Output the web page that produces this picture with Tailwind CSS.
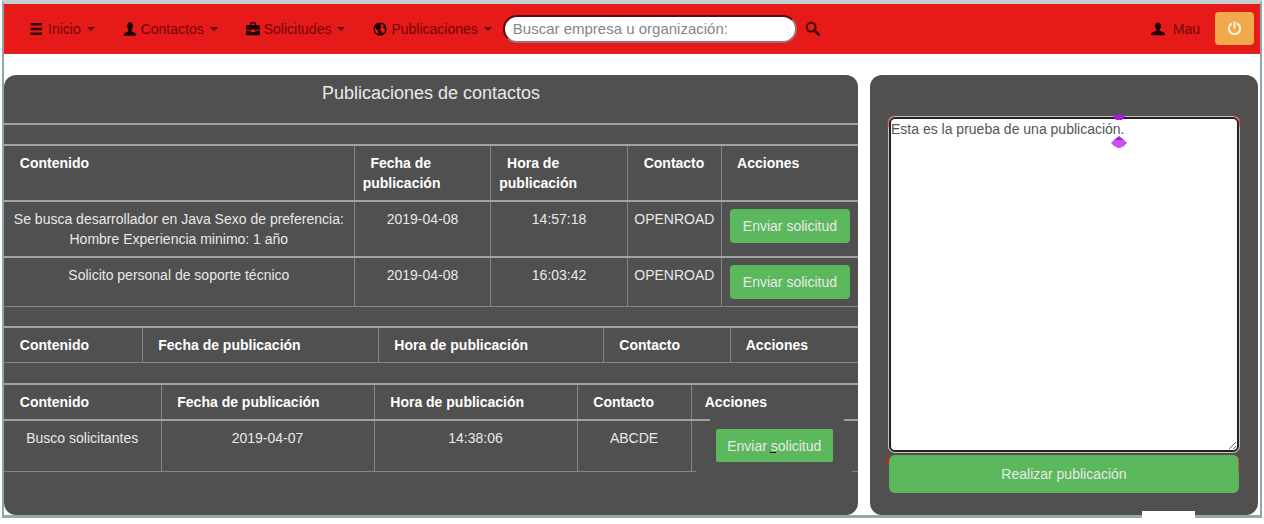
<!DOCTYPE html>
<html lang="es">
<head>
<meta charset="utf-8">
<meta name="viewport" content="width=device-width, initial-scale=1">
<title>Publicaciones</title>
<script src="https://cdn.jsdelivr.net/npm/@tailwindcss/browser@4"></script>
</head>
<body class="bg-white font-['Liberation_Sans',Arial,sans-serif] text-sm leading-5 text-[#e8e8e8]">
<div class="relative mx-0.5 border-x-2 border-t-4 border-b-3 border-x-[#8fa6ae] border-t-[#c3cfcf] border-b-[#93aaaa]">
  <nav class="flex h-[50px] items-center border-b border-[#d03030] bg-[#e71a1a] pr-1.5 text-[#6e0808]">
    <ul class="flex items-center gap-7 pl-[26px]">
      <li><button type="button" class="flex items-center gap-1">
        <svg class="size-[14px]" viewBox="0 0 14 14" fill="#2a0606"><path d="M.5 1h11.500v2.500H.5zM.5 5.700h11.500v2.500H.5zM.5 10.400h11.500v2.500H.5z"/></svg>Inicio
        <svg class="ml-0.5 h-1 w-2" viewBox="0 0 8 4" fill="#5a0808"><path d="M0 0h8L4 4z"/></svg></button></li>
      <li><button type="button" class="flex items-center gap-1">
        <svg class="size-[14px]" viewBox="0 0 14 14" fill="#1c0404"><path d="M7 .2C5 .2 4.100 1.600 4.100 3.600c0 2.200.8 3 1.200 4.300.2 1-.2 1.600-1.200 2.100C2.400 10.800.8 11.300.8 12.500V13.800h12.400v-1.300c0-1.200-1.600-1.700-3.300-2.500-1-.5-1.400-1.100-1.200-2.100.4-1.300 1.200-2.100 1.200-4.300C9.900 1.600 9 .2 7 .2z"/></svg>Contactos
        <svg class="ml-0.5 h-1 w-2" viewBox="0 0 8 4" fill="#5a0808"><path d="M0 0h8L4 4z"/></svg></button></li>
      <li><button type="button" class="flex items-center gap-1">
        <svg class="size-[14px]" viewBox="0 0 14 14" fill="#1c0404"><path fill-rule="evenodd" d="M4 3V1.500Q4 .3 5.200.3h3.600Q10 .3 10 1.500V3h2.500q1.500 0 1.500 1.500v2.700L9 8.600V7.500H5v1.100L0 7.200V4.500Q0 3 1.500 3zM5.300 3h3.400V1.600H5.300zM0 8.200l5 1.300v.8h4v-.8l5-1.300v4.100q0 .9-1 .9H1q-1 0-1-.9z"/></svg>Solicitudes
        <svg class="ml-0.5 h-1 w-2" viewBox="0 0 8 4" fill="#5a0808"><path d="M0 0h8L4 4z"/></svg></button></li>
      <li><button type="button" class="flex items-center gap-1">
        <svg class="size-[14px]" viewBox="0 0 14 14" fill="#1c0404"><path fill-rule="evenodd" d="M7 .4a6.600 6.600 0 1 0 0 13.200A6.600 6.600 0 0 0 7 .4zM7.600 2c1.800.1 3.300 1.200 4 2.700l-1.300-.4-1 .8 1.600 1 1.200 1.500c-.2 1.700-1.300 3.200-2.800 3.900l-.6-1.900-1.700-.9.3-1.900 1.100-.9-1.100-1 .9-1.200zM2.100 5.700l1.300 1.600 1.800 1.300-.1 1.900.6 1.600C3.500 11.600 1.900 9.500 1.900 7z"/></svg>Publicaciones
        <svg class="ml-0.5 h-1 w-2" viewBox="0 0 8 4" fill="#5a0808"><path d="M0 0h8L4 4z"/></svg></button></li>
    </ul>
    <form class="ml-[11px] flex items-center gap-2" onsubmit="return false">
      <input type="search" aria-label="Buscar empresa u organización" placeholder="Buscar empresa u organización:" class="h-7 w-[294px] rounded-full border-2 border-t-[#5c0c10] border-r-[#a07070] border-b-[#a07070] border-l-[#5c0c10] bg-white px-2 text-[15px] text-gray-700 placeholder:text-[#858585]">
      <button type="submit" aria-label="Buscar"><svg class="size-[15px]" viewBox="0 0 15 15" fill="none" stroke="#3a0505"><circle cx="6.200" cy="6.200" r="4.400" stroke-width="2"/><path d="M9.500 9.500l4 3.800" stroke-width="2.800" stroke-linecap="round"/></svg></button>
    </form>
    <div class="ml-auto flex items-center gap-[15px]">
      <a href="#" class="flex items-center gap-2"><svg class="size-[14px]" viewBox="0 0 14 14" fill="#1c0404"><path d="M7 .5C5 .5 4 1.800 4 3.800c0 1.800.7 2.900 1.500 3.700v1.300L1.500 10.300Q0 11 0 12.300v.9h14v-.9q0-1.300-1.500-2L8.500 8.800V7.500C9.300 6.700 10 5.600 10 3.800 10 1.800 9 .5 7 .5z"/></svg>Mau</a>
      <button type="button" aria-label="Cerrar sesión" class="grid h-[33px] w-[39px] place-items-center rounded bg-[#f0a94b]"><svg class="size-[15px]" viewBox="0 0 15 15" fill="none" stroke="#fff4dc" stroke-width="2" stroke-linecap="round"><path d="M4.300 2.900a5.600 5.600 0 1 0 6.400 0M7.500 1.200v5.600"/></svg></button>
    </div>
  </nav>

  <main class="grid grid-cols-[854fr_388fr] gap-3 pt-[21px] pr-0.5">
    <section class="rounded-xl bg-[#505050] pb-[43px]">
      <h1 class="mb-[19px] h-[50px] border-b-2 border-[#a2a2a2] pt-2 text-center text-lg leading-5">Publicaciones de contactos</h1>

      <table class="mb-[19px] w-full table-fixed border-collapse border-t-2 border-b border-t-[#a2a2a2] border-b-[#858585]">
        <colgroup><col class="w-[41%]"><col class="w-[16%]"><col class="w-[16%]"><col class="w-[11%]"><col class="w-[16%]"></colgroup>
        <thead><tr class="text-left align-top text-white">
          <th class="border-r border-[#858585] px-2 py-[7px]">&nbsp; Contenido</th>
          <th class="border-r border-[#858585] px-2 py-[7px]">&nbsp; Fecha de publicación</th>
          <th class="border-r border-[#858585] px-2 py-[7px]">&nbsp; Hora de publicación</th>
          <th class="border-r border-[#858585] px-2 py-[7px] whitespace-nowrap">&nbsp; Contacto</th>
          <th class="px-2 py-[7px]">&nbsp; Acciones</th>
        </tr></thead>
        <tbody>
          <tr class="border-t-2 border-[#a2a2a2] text-center align-top">
            <td class="border-r border-[#858585] px-2 py-[7px]">Se busca desarrollador en Java Sexo de preferencia: Hombre Experiencia minimo: 1 año</td>
            <td class="border-r border-[#858585] px-2 py-[7px]">2019-04-08</td>
            <td class="border-r border-[#858585] px-2 py-[7px]">14:57:18</td>
            <td class="border-r border-[#858585] px-1 py-[7px]">OPENROAD</td>
            <td class="px-2 pt-[7px]"><button type="button" class="h-[34px] w-full rounded bg-[#5cb85c] whitespace-nowrap">Enviar solicitud</button></td>
          </tr>
          <tr class="border-t-2 border-[#a2a2a2] text-center align-top">
            <td class="border-r border-[#858585] px-2 py-[7px]">Solicito personal de soporte técnico</td>
            <td class="border-r border-[#858585] px-2 py-[7px]">2019-04-08</td>
            <td class="border-r border-[#858585] px-2 py-[7px]">16:03:42</td>
            <td class="border-r border-[#858585] px-1 py-[7px]">OPENROAD</td>
            <td class="px-2 py-[7px]"><button type="button" class="block h-[34px] w-full rounded bg-[#5cb85c] whitespace-nowrap">Enviar solicitud</button></td>
          </tr>
        </tbody>
      </table>

      <table class="mb-5 w-full table-fixed border-collapse border-t-2 border-b border-t-[#a2a2a2] border-b-[#858585]">
        <colgroup><col class="w-[138px]"><col class="w-[236px]"><col class="w-[225px]"><col class="w-[127px]"><col></colgroup>
        <thead><tr class="text-left align-top text-white">
          <th class="border-r border-[#858585] px-2 py-[7px]">&nbsp; Contenido</th>
          <th class="border-r border-[#858585] px-2 py-[7px]">&nbsp; Fecha de publicación</th>
          <th class="border-r border-[#858585] px-2 py-[7px]">&nbsp; Hora de publicación</th>
          <th class="border-r border-[#858585] px-2 py-[7px]">&nbsp; Contacto</th>
          <th class="px-2 py-[7px]">&nbsp; Acciones</th>
        </tr></thead>
      </table>

      <table class="w-full table-fixed border-collapse border-t-2 border-t-[#a2a2a2]">
        <colgroup><col class="w-[157px]"><col class="w-[213px]"><col class="w-[203px]"><col class="w-[114px]"><col></colgroup>
        <thead><tr class="text-left align-top text-white">
          <th class="border-r border-[#858585] px-2 py-[7px]">&nbsp; Contenido</th>
          <th class="border-r border-[#858585] px-2 py-[7px]">&nbsp; Fecha de publicación</th>
          <th class="border-r border-[#858585] px-2 py-[7px]">&nbsp; Hora de publicación</th>
          <th class="border-r border-[#858585] px-2 py-[7px]">&nbsp; Contacto</th>
          <th class="px-1.5 py-[7px]">&nbsp; Acciones</th>
        </tr></thead>
        <tbody><tr class="h-[51px] border-t-2 border-b border-t-[#a2a2a2] border-b-[#858585] text-center align-top">
          <td class="border-r border-[#858585] px-2 py-[7px]">Busco solicitantes</td>
          <td class="border-r border-[#858585] px-2 py-[7px]">2019-04-07</td>
          <td class="border-r border-[#858585] px-2 py-[7px]">14:38:06</td>
          <td class="border-r border-[#858585] px-2 py-[7px]">ABCDE</td>
          <td class="relative pt-2 pr-[25px] pl-6">
            <span class="absolute -top-0.5 right-3.5 left-[18px] h-2 bg-[#505050]"></span>
            <span class="absolute right-1.5 -bottom-1 left-1 h-2 bg-[#505050]"></span>
            <button type="button" class="relative h-[33px] w-full rounded-xs bg-[#5cb85c] whitespace-nowrap">Enviar solicitud</button>
            <span class="absolute top-[31px] left-[78px] h-px w-1.5 bg-black"></span>
          </td>
        </tr></tbody>
      </table>
    </section>

    <section class="flex flex-col rounded-xl bg-[#524f4f] px-[19px] pt-[42px]">
      <div class="relative flex">
        <textarea aria-label="Publicación" class="h-[335px] w-full rounded-md border-2 border-[#222] bg-white p-0 leading-5 text-[#555] ring-1 ring-[#c8c4c4] outline-none">Esta es la prueba de una publicación.</textarea>
        <svg class="absolute -top-0.5 left-[222px] h-[33px] w-4" viewBox="0 0 16 33" fill="#a61ce0"><path d="M1 0h14l-4 5H5z"/><path d="M8 21l5 4H3z"/><path d="M3 25h10l3 3-3 3-4 2H7l-4-2-3-3z" fill="#c552ee"/></svg>
        <svg class="absolute -top-0.5 -left-0.5 size-3" viewBox="0 0 12 12" fill="none" stroke="#d83848"><path d="M1 12V7Q1 1 7 1"/></svg>
        <svg class="absolute -top-0.5 -right-0.5 size-3" viewBox="0 0 12 12" fill="none" stroke="#e02030"><path d="M5 1Q11 1 11 7v5"/></svg>
      </div>
      <button type="button" class="relative mt-[3px] h-[38px] rounded-md bg-[#5cb85c]">Realizar publicación
        <span class="absolute top-0.5 -left-0.5 h-2 w-0.5 bg-[#e01515]"></span>
        <span class="absolute top-1 right-0 h-3 w-px bg-[#e04a20]"></span>
      </button>
    </section>
  </main>
  <span class="absolute right-[65px] -bottom-1 h-2 w-[53px] bg-white"></span>
</div>
</body>
</html>
